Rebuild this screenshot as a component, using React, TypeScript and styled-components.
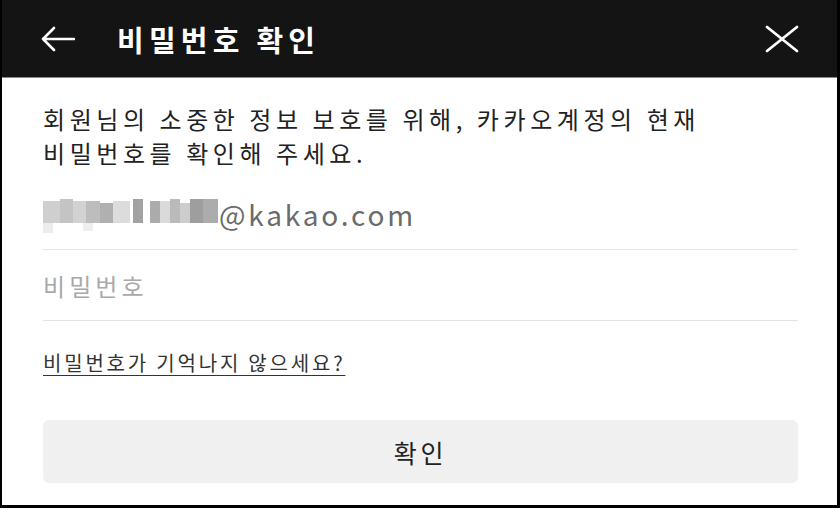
import styled, { createGlobalStyle } from "styled-components";

const GlobalStyle = createGlobalStyle`
  html, body {
    margin: 0;
    padding: 0;
    background: #000;
  }
  body {
    font-family: "Noto Sans CJK KR", "Noto Sans", sans-serif;
  }
`;

// pixelated (mosaic) cells that hide the account id
const mosaic: [number, number, number, number, string][] = [
  [0, 8, 17, 22, "#cfcfcf"],
  [17, 6, 13, 24, "#c4c4c4"],
  [30, 8, 13, 22, "#d2d2d2"],
  [43, 8, 14, 22, "#bdbdbd"],
  [57, 10, 13, 20, "#b0b0b0"],
  [70, 8, 17, 22, "#dcdcdc"],
  [90, 6, 10, 24, "#a2a2a2"],
  [107, 8, 10, 22, "#ababab"],
  [117, 8, 10, 22, "#dadada"],
  [127, 6, 10, 24, "#bababa"],
  [137, 10, 10, 20, "#cdcdcd"],
  [147, 6, 13, 24, "#9e9e9e"],
  [160, 6, 15, 24, "#acacac"],
  [0, 30, 10, 10, "#ececec"],
  [40, 30, 10, 8, "#eeeeee"],
];

const App = () => {
  return (
    <>
      <GlobalStyle />
      <Frame>
        <Header>
          <IconButton aria-label="back">
            <svg width="34" height="26" viewBox="0 0 34 26" fill="none">
              <path
                d="M13 2 L2 13 L13 24 M2 13 H33"
                stroke="#fff"
                strokeWidth="2.6"
                strokeLinecap="round"
                strokeLinejoin="round"
              />
            </svg>
          </IconButton>
          <Title>비밀번호 확인</Title>
          <CloseButton aria-label="close">
            <svg width="34" height="28" viewBox="0 0 34 28" fill="none">
              <path
                d="M2 2 L32 26 M32 2 L2 26"
                stroke="#fff"
                strokeWidth="2.8"
                strokeLinecap="round"
              />
            </svg>
          </CloseButton>
        </Header>
        <Body>
          <Intro>
            <Line>회원님의 소중한 정보 보호를 위해, 카카오계정의 현재</Line>
            <Line>비밀번호를 확인해 주세요.</Line>
          </Intro>
          <Field $first>
            <svg width="175" height="42" viewBox="0 0 175 42">
              {mosaic.map(([x, y, w, h, c], i) => (
                <rect key={i} x={x} y={y} width={w} height={h} fill={c} />
              ))}
            </svg>
            <Email>@kakao.com</Email>
          </Field>
          <Field>
            <Placeholder>비밀번호</Placeholder>
          </Field>
          <HelpLink href="#">비밀번호가 기억나지 않으세요?</HelpLink>
          <ConfirmButton>확인</ConfirmButton>
        </Body>
      </Frame>
    </>
  );
};

const Frame = styled.div`
  width: 840px;
  height: 508px;
  box-sizing: border-box;
  border-left: 2px solid #000;
  border-right: 3px solid #000;
  border-bottom: 3px solid #000;
  background: #fff;
  display: flex;
  flex-direction: column;
  overflow: hidden;
`;

const Header = styled.header`
  height: 77px;
  flex-shrink: 0;
  background: #141414;
  border-bottom: 1px solid #8a8a8a;
  display: flex;
  align-items: center;
  padding: 0 38px 0 39px;
`;

const IconButton = styled.button`
  background: none;
  border: 0;
  padding: 0;
  display: flex;
  align-items: center;
  cursor: pointer;
`;

const CloseButton = styled(IconButton)`
  margin-left: auto;
`;

const Title = styled.h1`
  margin: 0 0 0 42px;
  color: #fff;
  font-size: 29px;
  font-weight: 700;
  letter-spacing: 0.18em;
`;

const Body = styled.main`
  flex: 1;
  display: flex;
  flex-direction: column;
  padding: 24px 39px 0 41px;
`;

const Intro = styled.div`
  display: flex;
  flex-direction: column;
  color: #222;
  font-size: 24px;
  letter-spacing: 0.19em;
`;

const Line = styled.p`
  margin: 0;
  height: 34px;
  line-height: 34px;
  white-space: nowrap;
`;

const Field = styled.div<{ $first?: boolean }>`
  height: 70px;
  display: flex;
  align-items: center;
  border-bottom: 1px solid #e4e4e4;
  margin-top: ${({ $first }) => ($first ? "9px" : "0")};
`;

const Email = styled.span`
  color: #6b6b6b;
  font-size: 28px;
  letter-spacing: 0.1em;
  margin-left: 1px;
`;

const Placeholder = styled.span`
  color: #a9a9a9;
  font-size: 24px;
  letter-spacing: 0.17em;
`;

const HelpLink = styled.a`
  align-self: flex-start;
  margin-top: 27px;
  color: #333;
  font-size: 20px;
  letter-spacing: 0.14em;
  text-decoration: underline;
  text-underline-offset: 4px;
  text-decoration-thickness: 1px;
`;

const ConfirmButton = styled.button`
  margin-top: 43px;
  height: 63px;
  border: 0;
  border-radius: 6px;
  background: #f0f0f0;
  color: #222;
  font-family: inherit;
  font-size: 25px;
  letter-spacing: 0.15em;
  cursor: pointer;
`;

export default App;
